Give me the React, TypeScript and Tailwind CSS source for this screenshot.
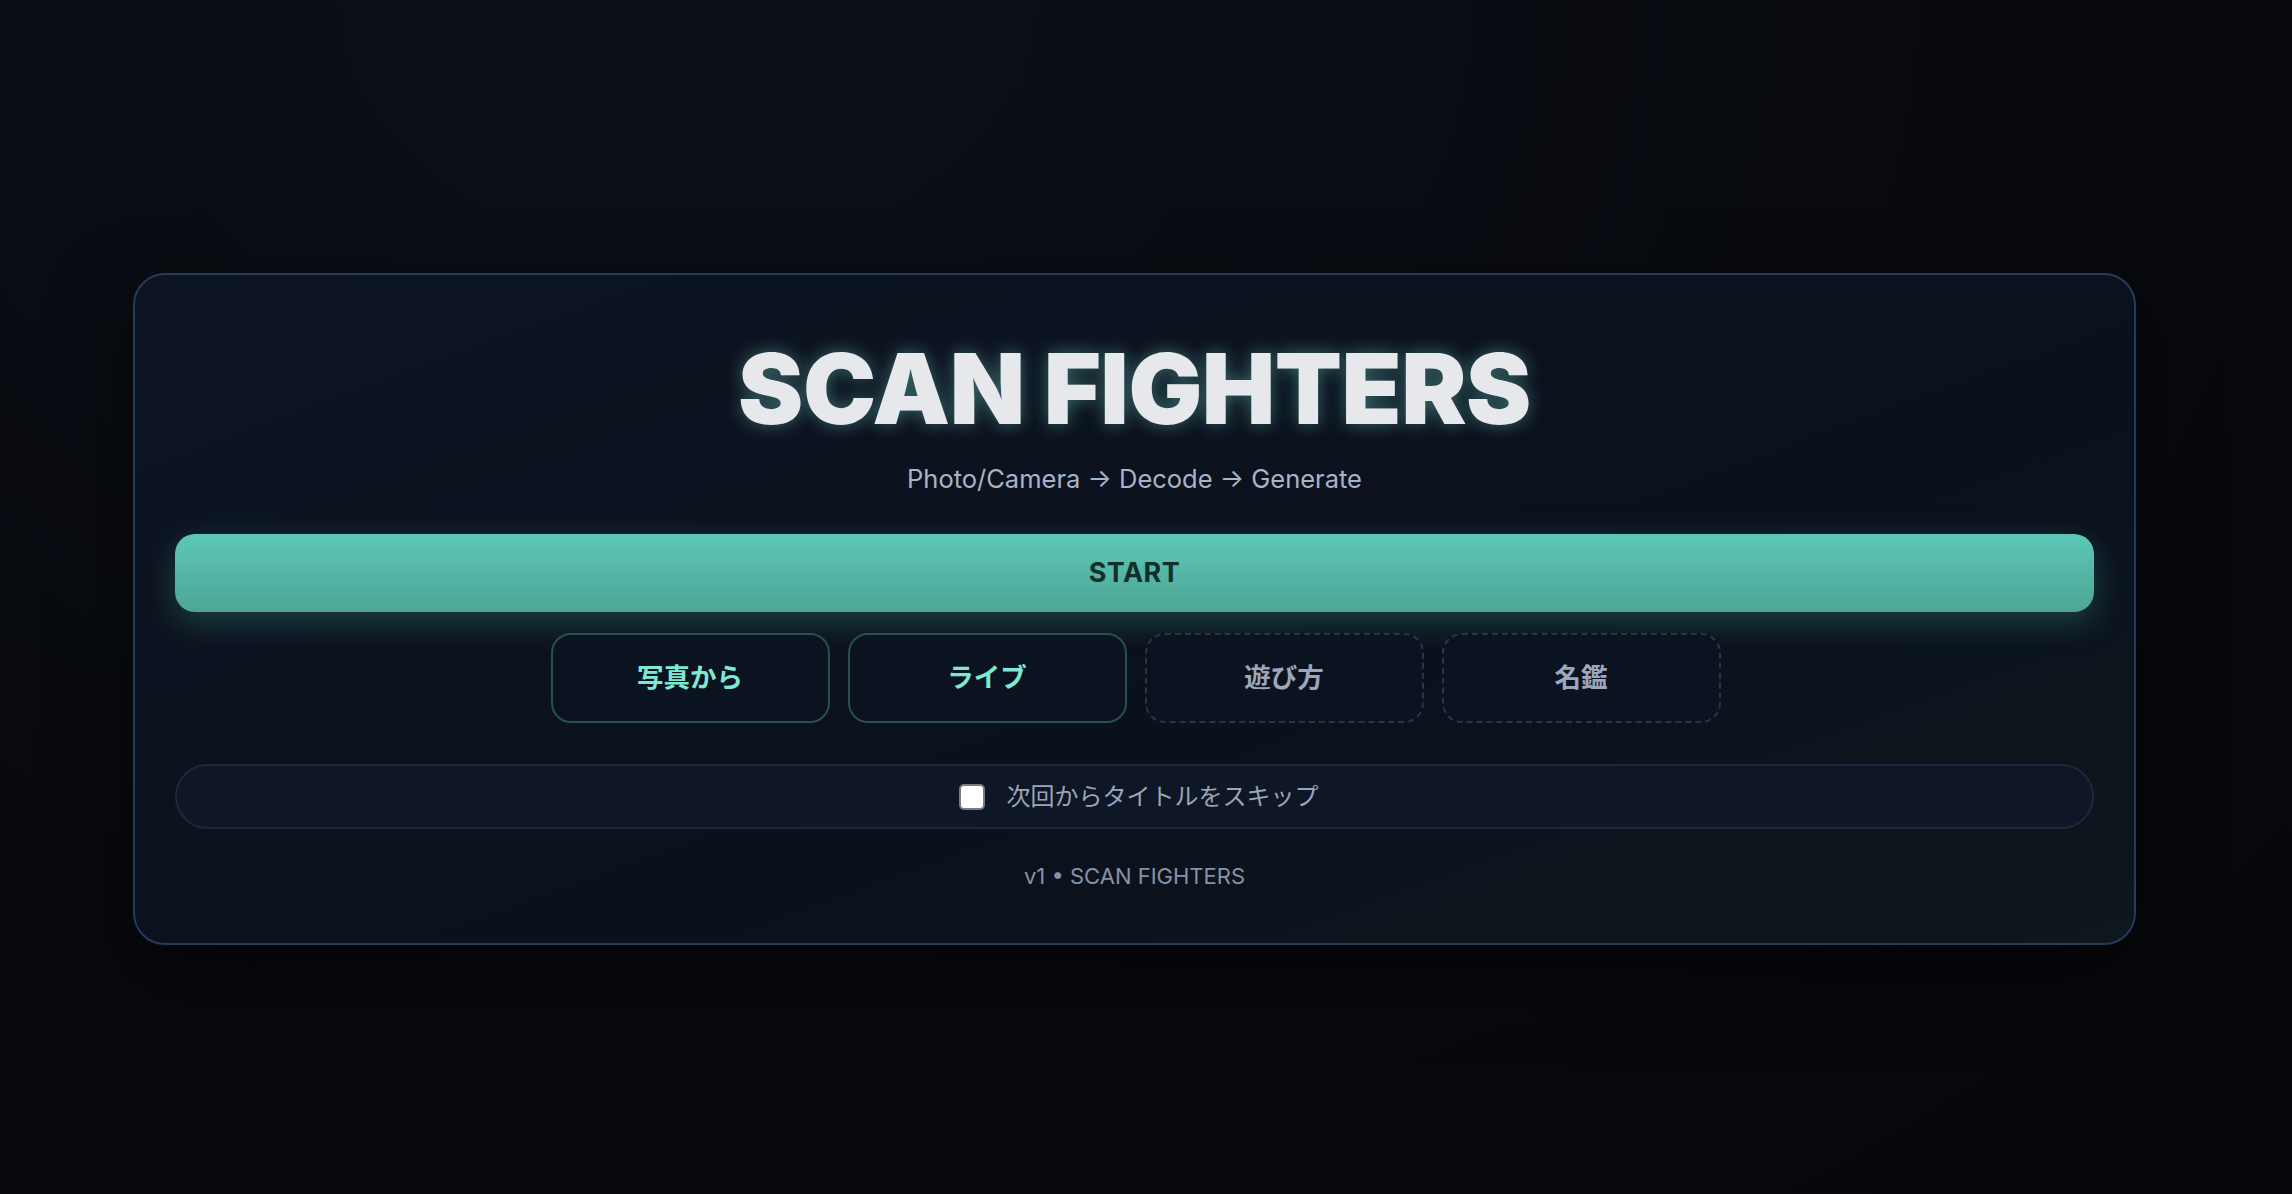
import React from "react";

const latin = { fontFamily: 'Inter, "Noto Sans CJK JP", sans-serif' };
const jp = { fontFamily: 'Inter, "Noto Sans CJK JP", sans-serif' };

export default function App() {
  return (
    <div
      className="w-[2292px] h-[1194px] overflow-hidden bg-[radial-gradient(ellipse_at_30%_0%,#0c1018_0%,#080a0f_55%,#05070a_100%)]"
      style={latin}
    >
      <div className="pt-[273px] pl-[133px]">
        <div className="w-[2003px] rounded-[32px] border-2 border-[#243b5a] bg-[linear-gradient(160deg,#0d1422_0%,#0b111c_60%,#0d171d_100%)] shadow-[0_30px_80px_rgba(0,0,0,0.55)] px-[40px] pt-[65px] pb-[53px] flex flex-col items-center">
          <h1 className="text-[98px] leading-none font-black tracking-[-0.5px] text-[#e6e8ec] [text-shadow:0_0_18px_rgba(110,210,200,0.45)]">
            SCAN FIGHTERS
          </h1>
          <p className="mt-[25px] text-[25.5px] leading-[32px] text-[#a9b4c6]">
            Photo/Camera → Decode → Generate
          </p>
          <button className="mt-[39px] w-full h-[78px] rounded-[20px] bg-[linear-gradient(180deg,#5cc8b6_0%,#4ea596_100%)] shadow-[0_10px_32px_rgba(70,190,170,0.28)] text-[27px] font-bold tracking-[0.5px] text-[#12302b]">
            START
          </button>
          <div className="mt-[21px] pl-[2px] flex gap-[18px]" style={jp}>
            <button className="w-[279px] h-[90px] rounded-[20px] border-2 border-[#24524e] bg-[#0b1220] text-[26.5px] font-bold text-[#7ee9d2]">
              写真から
            </button>
            <button className="w-[279px] h-[90px] rounded-[20px] border-2 border-[#24524e] bg-[#0b1220] text-[26.5px] font-bold text-[#7ee9d2]">
              ライブ
            </button>
            <button className="w-[279px] h-[90px] rounded-[20px] border-2 border-dashed border-[#2b3548] bg-[#0b1220] text-[26.5px] font-bold text-[#9ca7b9]">
              遊び方
            </button>
            <button className="w-[279px] h-[90px] rounded-[20px] border-2 border-dashed border-[#2b3548] bg-[#0b1220] text-[26.5px] font-bold text-[#9ca7b9]">
              名鑑
            </button>
          </div>
          <label className="mt-[41px] w-full h-[65px] pl-[8px] rounded-full border-2 border-[#1f2838] bg-[#0f1626] flex items-center justify-center gap-[22px]">
            <input
              type="checkbox"
              className="appearance-none w-[26px] h-[26px] bg-white border-2 border-[#777b82] rounded-[5px]"
            />
            <span className="text-[24px] text-[#9aa5b8]" style={jp}>
              次回からタイトルをスキップ
            </span>
          </label>
          <p className="mt-[33px] text-[22px] leading-[28px] text-[#8792a7]">
            v1 • SCAN FIGHTERS
          </p>
        </div>
      </div>
    </div>
  );
}
